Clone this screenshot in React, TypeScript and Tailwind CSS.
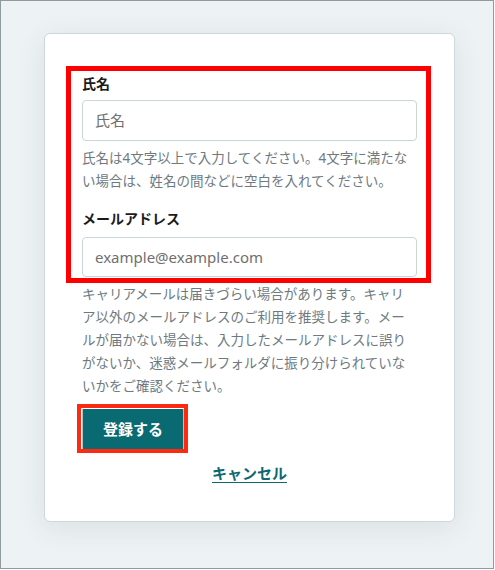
import React from "react";

export default function App() {
  return (
    <div
      className="w-[494px] h-[569px] border border-[#8e9ca1] bg-[#edf2f4] pt-[32px] pl-[43px]"
      style={{ fontFamily: '"Noto Sans", "Noto Sans CJK JP", sans-serif' }}
    >
      <div className="w-[411px] h-[489px] bg-white border border-[#cdd8dc] rounded-[6px] shadow-[0_6px_28px_rgba(60,80,90,0.10)] px-[37px] pt-[40px]">
        <div className="relative">
          <div className="absolute -left-[16px] -top-[8px] -right-[14px] -bottom-[6px] border-[5px] border-[#ff0000] pointer-events-none" />
          <div className="text-[14px] leading-[20px] font-bold text-[#1b1b1b]">氏名</div>
          <div className="mt-[6px] h-[41px] rounded-[4px] border border-[#c9d7db] bg-white flex items-center pl-[12px]">
            <span className="text-[15px] text-[#6f6f6f]">氏名</span>
          </div>
          <p className="mt-[6px] text-[13.5px] leading-[23px] text-[#6e7a7f]">
            氏名は4文字以上で入力してください。4文字に満たない場合は、姓名の間などに空白を入れてください。
          </p>
          <div className="mt-[16px] text-[14px] leading-[20px] font-bold text-[#1b1b1b]">メールアドレス</div>
          <div className="mt-[8px] h-[40px] rounded-[4px] border border-[#c9d7db] bg-white flex items-center pl-[12px]">
            <span className="text-[15px] text-[#6f6f6f]">example@example.com</span>
          </div>
        </div>
        <p className="mt-[6px] text-[13.5px] leading-[23px] text-[#6e7a7f]">
          キャリアメールは届きづらい場合があります。キャリア以外のメールアドレスのご利用を推奨します。メールが届かない場合は、入力したメールアドレスに誤りがないか、迷惑メールフォルダに振り分けられていないかをご確認ください。
        </p>
        <div className="mt-[11px] relative inline-block">
          <div className="absolute -left-[5px] -top-[5px] -right-[4px] -bottom-[4px] border-[4px] border-[#fb2a10] pointer-events-none" />
          <button className="h-[40px] w-[102px] bg-[#0a6a72] border-x border-[#b3c4c8] text-white text-[15px] font-bold flex items-center justify-center">
            登録する
          </button>
        </div>
        <div className="mt-[12px] text-center">
          <a className="text-[15px] leading-[22px] font-bold text-[#0d6870] underline underline-offset-[3px]">
            キャンセル
          </a>
        </div>
      </div>
    </div>
  );
}
